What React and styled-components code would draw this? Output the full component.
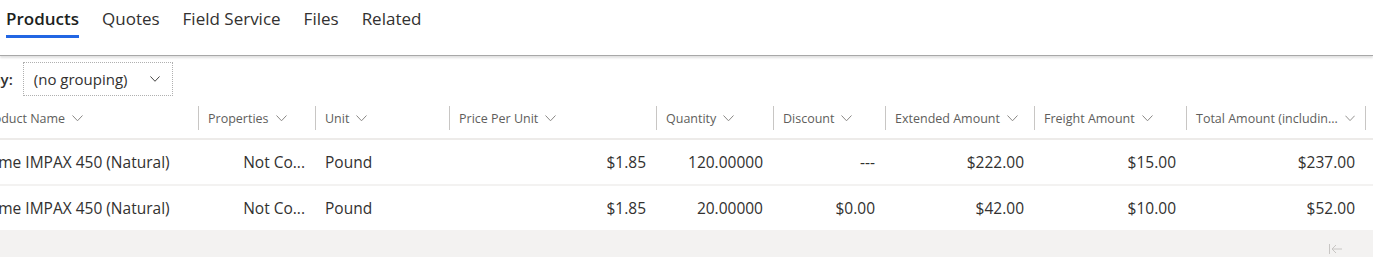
import styled, { createGlobalStyle } from 'styled-components';

const GlobalStyle = createGlobalStyle`
  body {
    margin: 0;
    background: #fff;
    font-family: "Segoe UI", "Open Sans", "Noto Sans", sans-serif;
    color: #323130;
    overflow: hidden;
  }
`

const Page = styled.div`
  width: 1373px;
  height: 257px;
  overflow: hidden;
`

const TabBar = styled.nav`
  height: 55px;
  display: flex;
  align-items: flex-start;
  padding-left: 6px;
  border-bottom: 1px solid #a8a8a8;
  box-shadow: 0 2px 2px rgba(0, 0, 0, 0.12);
  position: relative;
  z-index: 1;
`

const Tab = styled.div`
  font-size: 17px;
  font-weight: ${p => (p.active ? 600 : 400)};
  color: ${p => (p.active ? '#201f1e' : '#323130')};
  padding: 7px 0 0;
  margin-right: 23px;
  height: 28px;
  border-bottom: 3px solid ${p => (p.active ? '#2266e3' : 'transparent')};
`

const Content = styled.div`
  margin-left: -29px;
  padding-top: 6px;
`

const Toolbar = styled.div`
  display: flex;
  align-items: center;
  gap: 10px;
  height: 34px;
  margin-left: -29px;
  font-size: 15px;
  color: #323130;
`

const GroupLabel = styled.span`
  font-weight: 600;
`

const Select = styled.div`
  display: flex;
  align-items: center;
  justify-content: space-between;
  box-sizing: border-box;
  width: 150px;
  height: 34px;
  padding: 0 12px 0 10px;
  border: 1px dotted #b0b0b0;
  font-size: 15px;
`

const Grid = styled.div`
  display: grid;
  grid-template-columns: 227px 117px 134px 207px 117px 112px 149px 152px 179px 60px;
  margin-top: 5px;
`

const HeadCell = styled.div`
  position: relative;
  box-sizing: border-box;
  display: flex;
  align-items: center;
  gap: 7px;
  height: 39px;
  padding: 0 10px 3px;
  font-size: 12.5px;
  color: #605e5c;
  white-space: nowrap;
  border-bottom: 2px solid #edebe9;
  &::before {
    content: '';
    display: ${p => (p.first ? 'none' : 'block')};
    position: absolute;
    left: 0;
    top: 5px;
    bottom: 8px;
    width: 1px;
    background: #c8c6c4;
  }
`

const Cell = styled.div`
  height: 44px;
  display: flex;
  align-items: center;
  justify-content: ${p => (p.right ? 'flex-end' : 'flex-start')};
  padding: 0 10px;
  font-size: 15.5px;
  color: #323130;
  white-space: nowrap;
  border-bottom: 2px solid #f3f2f1;
`

const Footer = styled.div`
  height: 40px;
  background: #f3f2f1;
  display: flex;
  justify-content: flex-end;
  align-items: flex-start;
  padding: 14px 31px 0 0;
  box-sizing: border-box;
  margin-top: -2px;
`

const Chevron = ({ size = 11, color = '#8a8886' }) => (
  <svg width={size} height={size * 0.6} viewBox="0 0 11 6.6" fill="none">
    <polyline points="0.5,0.5 5.5,5.8 10.5,0.5" stroke={color} strokeWidth="1" />
  </svg>
)

const columns = [
  { label: 'Product Name' },
  { label: 'Properties' },
  { label: 'Unit' },
  { label: 'Price Per Unit' },
  { label: 'Quantity' },
  { label: 'Discount' },
  { label: 'Extended Amount' },
  { label: 'Freight Amount' },
  { label: 'Total Amount (includin...' },
  { label: '', blank: true },
]

const rows = [
  ['Acme IMPAX 450 (Natural)', 'Not Co...', 'Pound', '$1.85', '120.00000', '---', '$222.00', '$15.00', '$237.00'],
  ['Acme IMPAX 450 (Natural)', 'Not Co...', 'Pound', '$1.85', '20.00000', '$0.00', '$42.00', '$10.00', '$52.00'],
]

const rightAligned = [false, true, false, true, true, true, true, true, true]

export default function App() {
  return (
    <Page>
      <GlobalStyle />
      <TabBar>
        <Tab active>Products</Tab>
        <Tab>Quotes</Tab>
        <Tab>Field Service</Tab>
        <Tab>Files</Tab>
        <Tab>Related</Tab>
      </TabBar>
      <Content>
        <Toolbar>
          <GroupLabel>Group by:</GroupLabel>
          <Select>
            <span>(no grouping)</span>
            <Chevron size={10} color="#323130" />
          </Select>
        </Toolbar>
        <Grid>
          {columns.map((c, i) => (
            <HeadCell key={i} first={i === 0}>
              {!c.blank && (
                <>
                  <span>{c.label}</span>
                  <Chevron />
                </>
              )}
            </HeadCell>
          ))}
          {rows.map((r, ri) => (
            <>
              {r.map((v, ci) => (
                <Cell key={ri + '-' + ci} right={rightAligned[ci]}>{v}</Cell>
              ))}
              <Cell key={ri + '-end'} />
            </>
          ))}
        </Grid>
        <Footer>
          <svg width="14" height="10" viewBox="0 0 14 10" fill="none" stroke="#c8c6c4" strokeWidth="1">
            <line x1="1.5" y1="0" x2="1.5" y2="10" />
            <polyline points="8,1 4,5 8,9" />
            <line x1="4" y1="5" x2="14" y2="5" />
          </svg>
        </Footer>
      </Content>
    </Page>
  )
}
